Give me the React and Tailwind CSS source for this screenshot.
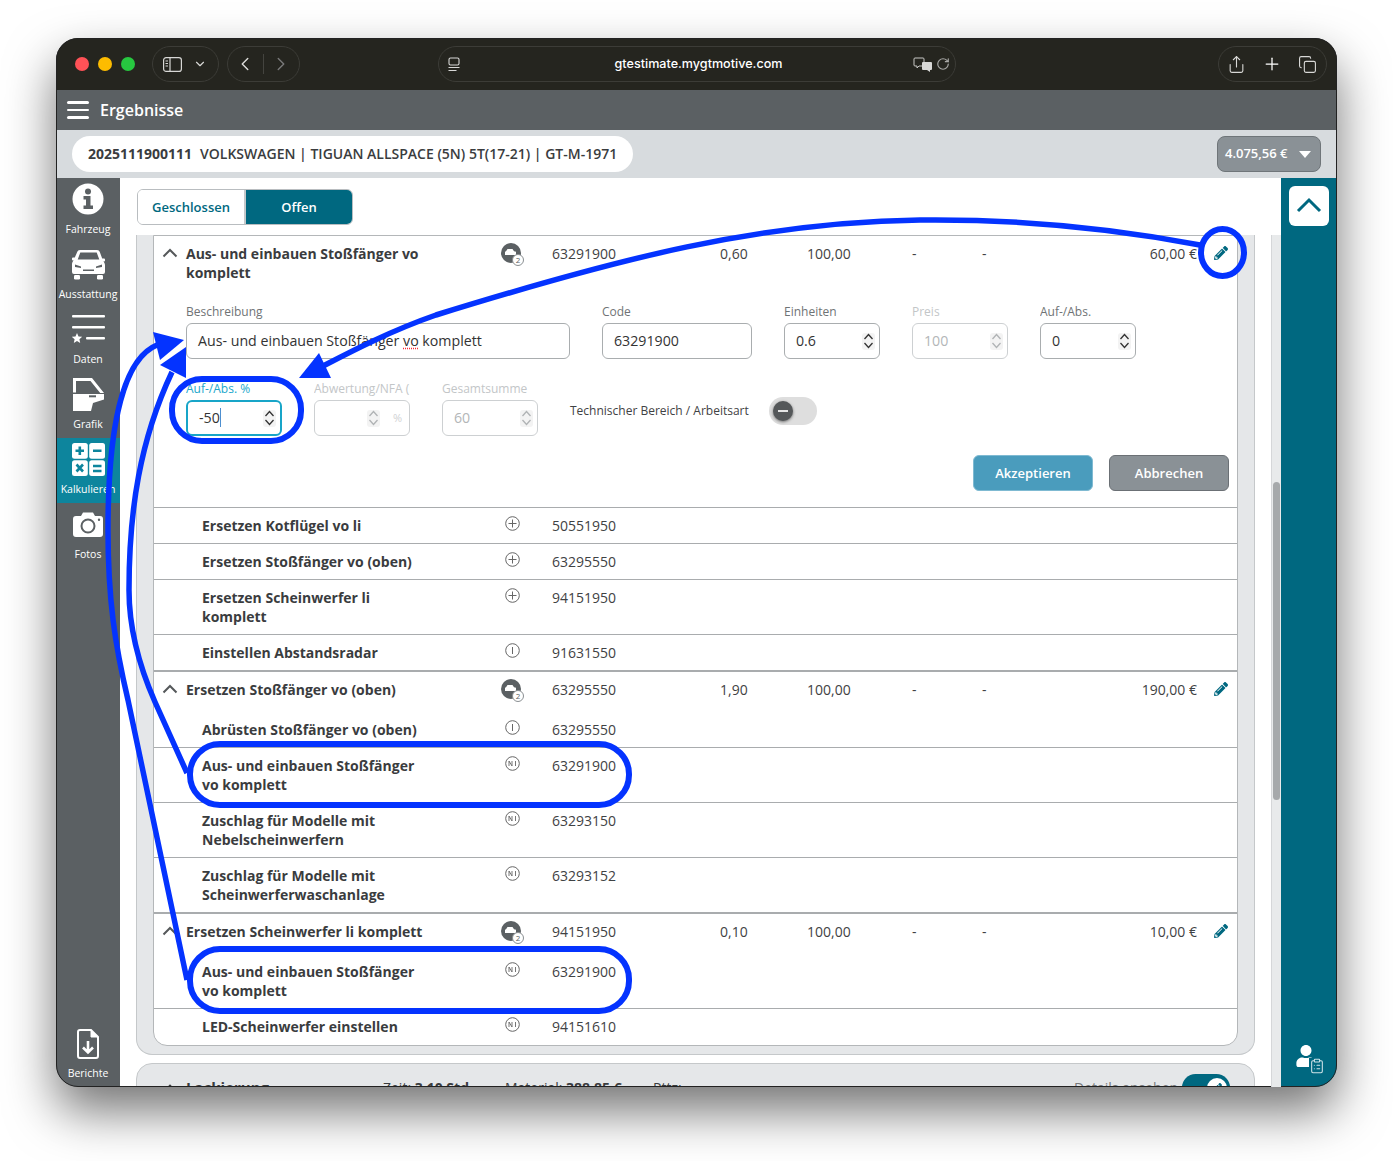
import { ChevronDown, ChevronLeft, ChevronRight, ClipboardList, Copy, Plus, RotateCw, Share } from "lucide-react";
import { FaPencilAlt, FaUser } from "react-icons/fa";

const sideItems = [
  { label: "Fahrzeug", icon: <InfoIcon /> },
  { label: "Ausstattung", icon: <CarIcon /> },
  { label: "Daten", icon: <DataIcon /> },
  { label: "Grafik", icon: <DoorIcon /> },
  { label: "Kalkulieren", icon: <CalcIcon />, active: true },
  { label: "Fotos", icon: <CameraIcon /> },
];

function InfoIcon() {
  return (
    <svg width="32" height="32" viewBox="0 0 32 32">
      <circle cx="16" cy="16" r="15.500" fill="white" />
      <circle cx="16" cy="8.500" r="3" fill="#5b6063" />
      <path d="M11.500 13h7v9.500h2.500V26H11.500v-3.500h2.500V16.500h-2.500z" fill="#5b6063" />
    </svg>
  );
}

function CarIcon() {
  return (
    <svg width="33" height="31" viewBox="0 0 33 31" fill="white">
      <path fillRule="evenodd" d="M8 1h17c1.500 0 2.300.8 2.800 2l2.400 6.500H32a1 1 0 0 1 1 1v1a1 1 0 0 1-1 1h-.7c1.100 1 1.700 2.300 1.700 3.800V23a2 2 0 0 1-2 2H2a2 2 0 0 1-2-2v-7.700c0-1.500.6-2.800 1.700-3.800H1a1 1 0 0 1-1-1v-1a1 1 0 0 1 1-1h1.800L5.200 3C5.700 1.800 6.500 1 8 1zm.3 2.500L5.700 10.500h21.600L24.700 3.500zM3 15.500v2.500l6 1v-1.500zM30 15.500v2.500l-6 1v-1.500zM11 20.500v1.500h11v-1.500z" />
      <rect x="2" y="26" width="6" height="4.500" rx="1.200" />
      <rect x="25" y="26" width="6" height="4.500" rx="1.200" />
    </svg>
  );
}

function DataIcon() {
  return (
    <svg width="33" height="28" viewBox="0 0 33 28" fill="white">
      <rect x="0" y="0" width="33" height="2.500" rx="1" />
      <rect x="0" y="11" width="33" height="2.500" rx="1" />
      <rect x="14" y="22" width="19" height="2.500" rx="1" />
      <path d="M5 18l1.500 3.400 3.700.4-2.800 2.500.8 3.700L5 25.900 1.800 27.900l.8-3.700L-.2 21.800l3.700-.4z" />
    </svg>
  );
}

function DoorIcon() {
  return (
    <svg width="32" height="33" viewBox="0 0 32 33" fill="white">
      <path d="M1 0h19l12 15h-3.800L18.500 3H4v11.500H1z" />
      <path d="M1 16h31v5.500l-11 3.500-2 8H1z" />
      <rect x="17" y="17.300" width="7" height="2" fill="#5b6063" />
    </svg>
  );
}

function CalcIcon() {
  return (
    <svg width="33" height="33" viewBox="0 0 33 33">
      <rect x="0" y="0" width="15.800" height="15.800" rx="2.500" fill="white" />
      <rect x="17.200" y="0" width="15.800" height="15.800" rx="2.500" fill="white" />
      <rect x="0" y="17.200" width="15.800" height="15.800" rx="2.500" fill="white" />
      <rect x="17.200" y="17.200" width="15.800" height="15.800" rx="2.500" fill="white" />
      <g stroke="#0d859d" strokeWidth="2.600">
        <path d="M3.500 7.800h8.500M7.800 3.500v8.500M21 7.800h8.500M4.500 21.500l6.500 7M11 21.500l-6.500 7M21 23h8.500M21 28h8.500" />
      </g>
    </svg>
  );
}

function CameraIcon() {
  return (
    <svg width="30" height="25" viewBox="0 0 30 25" fill="white">
      <path fillRule="evenodd" d="M3 4h5l2-3.500h10L22 4h5a3 3 0 0 1 3 3v15a3 3 0 0 1-3 3H3a3 3 0 0 1-3-3V7a3 3 0 0 1 3-3zm12 2.500a7.500 7.500 0 1 0 0 15 7.500 7.500 0 0 0 0-15zm0 2a5.500 5.500 0 1 1 0 11 5.500 5.500 0 0 1 0-11zM26 6.500a1.200 1.200 0 1 0 0 2.400 1.200 1.200 0 0 0 0-2.400z" />
    </svg>
  );
}

function ReportIcon() {
  return (
    <svg width="24" height="32" viewBox="0 0 24 32" fill="none" stroke="white" strokeWidth="2">
      <path d="M4 2h11l7 7v19a2 2 0 0 1-2 2H4a2 2 0 0 1-2-2V4a2 2 0 0 1 2-2z" />
      <path d="M15 2v7h7" fill="white" strokeWidth="1" />
      <path d="M12 13v11M7 19.500l5 5 5-5" strokeWidth="2.600" />
    </svg>
  );
}

function SideItem({ label, icon, active }) {
  return (
    <div className={`h-[65px] flex flex-col items-center ${active ? "bg-[#0d859d]" : ""}`}>
      <div className="h-[44px] -mt-[1px] flex items-center justify-center">{icon}</div>
      <div className="text-[10.500px] leading-[14px] mt-[1px] text-white">{label}</div>
    </div>
  );
}

function Stepper({ faded }) {
  return (
    <div className="w-[13px] h-[17px] rounded-[3px] bg-[#f3f3f3] flex items-center justify-center">
      <svg width="11" height="16" viewBox="0 0 11 16" fill="none" stroke={faded ? "#b0b3b5" : "#333"} strokeWidth="1.300">
        <path d="M1.500 6L5.500 1.500 9.500 6M1.500 10l4 4.500 4-4.500" />
      </svg>
    </div>
  );
}

function Field({ label, width, value, disabled, stepper, focus, children }) {
  const labelColor = focus ? "text-[#20a7cb]" : disabled ? "text-[#c3c6c8]" : "text-[#6f7375]";
  const border = focus ? "border-2 border-[#18a5c8]" : disabled ? "border border-[#cdd0d2]" : "border border-[#a9adaf]";
  const textColor = disabled ? "text-[#b3b6b8]" : "text-[#333]";
  return (
    <div className={width}>
      <div className={`h-[16px] pt-[1px] text-[12px] leading-[16px] whitespace-nowrap overflow-hidden mb-[4px] ${labelColor}`}>{label}</div>
      <div className={`h-[36px] rounded-[6px] pl-[11px] pr-[4px] flex items-center justify-between text-[14.200px] bg-white ${border} ${textColor}`}>
        <div>{children || value}</div>
        {stepper && <Stepper faded={disabled} />}
      </div>
    </div>
  );
}

function CarBadge() {
  return (
    <div className="relative w-[20px] h-[20px] rounded-full bg-[#5b6063] flex items-center justify-center">
      <svg width="11" height="6" viewBox="0 0 11 6" fill="white" className="-mt-[3px] -ml-[2px]">
        <path d="M2.500 0h5l1.500 2.200 2 .6V6H0V2.800l1-.6z" />
      </svg>
      <div className="absolute right-[-3px] bottom-[-3px] w-[12px] h-[12px] rounded-full bg-white border border-[#8a8f92] text-[8px] leading-[10px] text-center text-[#5b6063]">
        2
      </div>
    </div>
  );
}

function RoundIcon({ kind }) {
  return (
    <svg width="15" height="15" viewBox="0 0 15 15" fill="none" stroke="#666" strokeWidth="1">
      <circle cx="7.500" cy="7.500" r="6.800" />
      {kind === "plus" && <path d="M7.500 3.500v8M3.500 7.500h8" />}
      {kind === "info" && <path d="M7.500 4v7" />}
      {kind === "ni" && <path d="M4 10V5l3 5V5M10.500 5v5" strokeWidth="0.900" />}
    </svg>
  );
}

function ChildRow({ title, code, icon, height }) {
  return (
    <div className={`flex border-t border-[#a9acae] pl-[48px] pt-[8px] text-[14px] leading-[19px] ${height}`}>
      <div className="w-[298px]">
        <div className="w-[222px] font-bold text-[#3a3c3e]">{title}</div>
      </div>
      <div className="w-[24px] mr-[28px] flex justify-center h-[15px]">
        <RoundIcon kind={icon} />
      </div>
      <div className="text-[#3f4244]">{code}</div>
    </div>
  );
}

function MainRow({ title, code, units, price, height, form }) {
  return (
    <div className={`flex text-[14px] leading-[19px] pt-[8px] ${form ? "h-[67px]" : height} ${form ? "" : "border-t-2 border-[#a9acae]"}`}>
      <div className="w-[32px] pl-[8px] pt-[4px]">
        <svg width="16" height="10" viewBox="0 0 16 10" fill="none" stroke="#55585a" strokeWidth="2">
          <path d="M1.500 8.500L8 2l6.500 6.500" />
        </svg>
      </div>
      <div className="w-[314px]">
        <div className="w-[250px] font-bold text-[#3a3c3e]">{title}</div>
      </div>
      <div className="w-[24px] mr-[29px] -ml-[1px] flex justify-center -mt-[1px]">
        <CarBadge />
      </div>
      <div className="w-[168px] text-[#3f4244]">{code}</div>
      <div className="w-[87px] text-[#3f4244]">{units}</div>
      <div className="w-[105px] text-[#3f4244]">100,00</div>
      <div className="w-[70px] text-[#3f4244]">-</div>
      <div className="w-[20px] text-[#3f4244]">-</div>
      <div className="w-[195px] text-right text-[#3f4244]">{price}</div>
      <div className="pl-[17px] pt-[2px]">
        <FaPencilAlt size={14} className="text-[#006880]" />
      </div>
    </div>
  );
}

function EditForm() {
  return (
    <div className="pl-[32px] pr-[8px] pb-[16px]">
      <div className="flex gap-8">
        <Field label="Beschreibung" width="w-[384px]">
          Aus- und einbauen Stoßfänger <span className="underline decoration-dotted decoration-red-500">vo</span> komplett
        </Field>
        <Field label="Code" width="w-[150px]" value="63291900" />
        <Field label="Einheiten" width="w-[96px]" value="0.6" stepper />
        <Field label="Preis" width="w-[96px]" value="100" disabled stepper />
        <Field label="Auf-/Abs." width="w-[96px]" value="0" stepper />
      </div>
      <div className="flex gap-8 mt-[21px]">
        <Field label="Auf-/Abs. %" width="w-[96px]" focus stepper>
          <span className="border-r border-[#4d8fd0] pr-[0.500px]">-50</span>
        </Field>
        <Field label="Abwertung/NFA (Prozent)" width="w-[96px]" disabled>
          <div className="w-[76px] flex justify-end items-center gap-[13px]">
            <Stepper faded />
            <span className="text-[11px] text-[#d0d2d4]">%</span>
          </div>
        </Field>
        <Field label="Gesamtsumme" width="w-[96px]" value="60" disabled stepper />
        <div className="flex items-center mt-[20px] h-[22px] gap-[20px]">
          <span className="text-[12px] text-[#3f4244]">Technischer Bereich / Arbeitsart</span>
          <div className="w-[48px] h-[28px] rounded-full bg-[#dedede] flex items-center pl-[4px]">
            <div className="w-[20px] h-[20px] rounded-full bg-[#55585a] shadow-[0_1px_3px_rgba(0,0,0,0.5)] flex items-center justify-center">
              <div className="w-[10px] h-[2px] bg-[#e5e5e5]"></div>
            </div>
          </div>
        </div>
      </div>
      <div className="flex justify-end gap-4 mt-[19px]">
        <div className="w-[120px] h-[36px] pt-[1px] rounded-[6px] bg-[#4a9cbd] border border-[#7fbad2] text-white text-[13px] font-semibold flex items-center justify-center">
          Akzeptieren
        </div>
        <div className="w-[120px] h-[36px] pt-[1px] rounded-[6px] bg-[#8a9196] border border-[#6b7075] text-white text-[13px] font-semibold flex items-center justify-center">
          Abbrechen
        </div>
      </div>
    </div>
  );
}

function Annotations() {
  return (
    <svg className="absolute left-0 top-0 pointer-events-none" width="1393" height="1161" fill="none" stroke="#0433ff" strokeWidth="5.500">
      <ellipse cx="1222.500" cy="252.500" rx="21.500" ry="23.500" strokeWidth="6" />
      <rect x="172" y="379" width="129" height="62" rx="30" strokeWidth="6" />
      <rect x="190" y="744" width="439" height="61" rx="30" strokeWidth="6" />
      <rect x="190" y="949" width="439" height="62" rx="30" strokeWidth="6" />
      <path d="M1200 245C1100 226 1010 219 920 220C760 222 620 258 436 315C390 331 350 352 323 366" />
      <path d="M157 345C125 358 108 420 108 530C108 600 115 645 128 700L187 980" />
      <path d="M172 372C140 440 129 510 129 590C129 630 140 668 155 702L187 773" />
      <g fill="#0433ff" stroke="none">
        <path d="M299 378L319 353L331 378z" />
        <path d="M184 340L153 332L160 360z" />
        <path d="M186 347L160 365L186 378z" />
      </g>
    </svg>
  );
}

export default function App() {
  return (
    <div className="relative h-[1161px] bg-white px-[56px] pt-[38px] [font-family:'Open_Sans',sans-serif]">
      <div className="h-[1049px] flex flex-col overflow-hidden rounded-[22px] outline outline-1 -outline-offset-1 outline-[#222] shadow-[0_24px_50px_rgba(0,0,0,0.55)]">
        {/* browser chrome */}
        <div className="h-[52px] shrink-0 bg-[#25251f] flex items-center pl-[19px] pr-[10px] text-[#d8d8d6]">
          <div className="flex gap-[9px] w-[77px]">
            <div className="w-[14px] h-[14px] rounded-full bg-[#ff5257]"></div>
            <div className="w-[14px] h-[14px] rounded-full bg-[#fdbc00]"></div>
            <div className="w-[14px] h-[14px] rounded-full bg-[#27c840]"></div>
          </div>
          <div className="w-[67px] h-[36px] rounded-full border border-[#3c3c37] flex items-center pl-[10px] gap-[11px]">
            <svg width="19" height="15" viewBox="0 0 19 15" fill="none" stroke="#d8d8d6" strokeWidth="1.200">
              <rect x="0.600" y="0.600" width="17.800" height="13.800" rx="2.500" />
              <path d="M7 1v13M2.500 4h2.500M2.500 6.500h2.500M2.500 9h2.500" />
            </svg>
            <ChevronDown size={14} />
          </div>
          <div className="ml-[8px] w-[73px] h-[36px] rounded-full border border-[#3c3c37] flex items-center pl-[6px]">
            <ChevronLeft size={22} strokeWidth={1.600} />
            <div className="w-px h-[20px] bg-[#44443f] mx-[7px]"></div>
            <ChevronRight size={22} strokeWidth={1.600} className="text-[#777] -ml-[1px]" />
          </div>
          <div className="ml-[138px] w-[518px] h-[36px] rounded-full border border-[#3c3c37] flex items-center pl-[8px] pr-[5px]">
            <svg width="14" height="15" viewBox="0 0 14 15" fill="none" stroke="#d8d8d6" strokeWidth="1.100">
              <rect x="2" y="1" width="10" height="7" rx="1.500" />
              <path d="M1.500 10.500h11M1.500 13.500h8" />
            </svg>
            <div className="flex-1 text-center pl-[21px] text-[12.600px] font-medium text-white [font-family:Inter,sans-serif]">gtestimate.mygtmotive.com</div>
            <svg width="20" height="15" viewBox="0 0 20 15" className="-ml-[2px]">
              <path d="M2 1h8a1 1 0 0 1 1 1v6a1 1 0 0 1-1 1H6l-2 2V9H2a1 1 0 0 1-1-1V2a1 1 0 0 1 1-1z" fill="none" stroke="#c8c8c6" />
              <path d="M10 5h8a1 1 0 0 1 1 1v6a1 1 0 0 1-1 1h-1v2l-3-2h-4a1 1 0 0 1-1-1V6a1 1 0 0 1 1-1z" fill="#d8d8d6" />
            </svg>
            <RotateCw size={14} className="ml-[3px] text-[#a8a8a6]" />
          </div>
          <div className="ml-[262px] w-[109px] h-[36px] rounded-full border border-[#3c3c37] flex items-center justify-between pl-[8px] pr-[9px]">
            <Share size={19} strokeWidth={1.400} />
            <Plus size={20} strokeWidth={1.500} className="text-white" />
            <Copy size={19} strokeWidth={1.400} />
          </div>
        </div>

        {/* app header */}
        <div className="h-[40px] shrink-0 bg-[#5b6063] flex items-center pl-[11px] text-white">
          <div className="flex flex-col gap-[5px] w-[22px]">
            <div className="h-[2.500px] bg-white rounded"></div>
            <div className="h-[2.500px] bg-white rounded"></div>
            <div className="h-[2.500px] bg-white rounded"></div>
          </div>
          <div className="ml-[11px] text-[16px] font-semibold">Ergebnisse</div>
        </div>

        {/* vehicle bar */}
        <div className="h-[48px] shrink-0 bg-[#d7dbde] flex items-center justify-between pl-[16px] pr-[16px]">
          <div className="h-[36px] w-[561px] pb-[2px] rounded-full bg-white pl-[16px] flex items-center text-[14px] font-semibold text-[#3a3c3e] whitespace-nowrap">
            <span className="font-bold">2025111900111</span>
            <span className="ml-[8px]">VOLKSWAGEN | TIGUAN ALLSPACE (5N) 5T(17-21) | GT-M-1971</span>
          </div>
          <div className="w-[104px] h-[36px] rounded-[8px] bg-[#8a9196] border border-[#6f7579] flex items-center pl-[7px] gap-[11px] text-white text-[13px] font-semibold">
            <span>4.075,56 €</span>
            <div className="w-0 h-0 border-l-[6px] border-r-[6px] border-t-[7px] border-l-transparent border-r-transparent border-t-white"></div>
          </div>
        </div>

        <div className="flex-1 flex min-h-0">
          {/* sidebar */}
          <div className="w-[64px] shrink-0 bg-[#5b6063] flex flex-col justify-between">
            <div>
              {sideItems.map((item) => (
                <SideItem key={item.label} {...item} />
              ))}
            </div>
            <div className="flex flex-col items-center pb-[7px]">
              <ReportIcon />
              <div className="text-[10.500px] leading-[14px] mt-[6px] text-white">Berichte</div>
            </div>
          </div>

          {/* main */}
          <div className="flex-1 flex flex-col min-w-0 bg-white">
            <div className="h-[57px] shrink-0 pl-[17px] pt-[11px]">
              <div className="w-[216px] h-[36px] flex rounded-[6px] border border-[#b9bdc0] overflow-hidden text-[13px] font-semibold">
                <div className="w-[106px] pt-[1px] flex items-center justify-center text-[#006880] bg-white">Geschlossen</div>
                <div className="w-[2px] bg-[#c5c8ca]"></div>
                <div className="flex-1 pt-[1px] flex items-center justify-center text-white bg-[#006880]">Offen</div>
              </div>
            </div>
            <div className="flex-1 flex min-h-0 overflow-hidden">
              <div className="w-[1119px] ml-[16px] shrink-0">
                <div className="bg-[#e5e7e9] border-x border-b border-[#c5c8ca] rounded-b-[16px] pl-[16px] pr-[16px] pb-[8px]">
                  <div className="bg-white border-x border-y border-[#b4b7b9] rounded-b-[14px] h-[811px] overflow-hidden">
                    <MainRow form title="Aus- und einbauen Stoßfänger vo komplett" code="63291900" units="0,60" price="60,00 €" />
                    <EditForm />
                    <ChildRow title="Ersetzen Kotflügel vo li" icon="plus" code="50551950" height="h-[36px]" />
                    <ChildRow title="Ersetzen Stoßfänger vo (oben)" icon="plus" code="63295550" height="h-[36px]" />
                    <ChildRow title="Ersetzen Scheinwerfer li komplett" icon="plus" code="94151950" height="h-[55px]" />
                    <ChildRow title="Einstellen Abstandsradar" icon="info" code="91631550" height="h-[36px]" />
                    <MainRow title="Ersetzen Stoßfänger vo (oben)" code="63295550" units="1,90" price="190,00 €" height="h-[41px]" />
                    <div className="flex pl-[48px] pt-[9px] h-[36px] text-[14px] leading-[19px]">
                      <div className="w-[298px] font-bold text-[#3a3c3e]">Abrüsten Stoßfänger vo (oben)</div>
                      <div className="w-[24px] mr-[28px] flex justify-center">
                        <RoundIcon kind="info" />
                      </div>
                      <div className="text-[#3f4244]">63295550</div>
                    </div>
                    <ChildRow title="Aus- und einbauen Stoßfänger vo komplett" icon="ni" code="63291900" height="h-[55px]" />
                    <ChildRow title="Zuschlag für Modelle mit Nebelscheinwerfern" icon="ni" code="63293150" height="h-[55px]" />
                    <ChildRow title="Zuschlag für Modelle mit Scheinwerferwaschanlage" icon="ni" code="63293152" height="h-[55px]" />
                    <MainRow title="Ersetzen Scheinwerfer li komplett" code="94151950" units="0,10" price="10,00 €" height="h-[41px]" />
                    <div className="flex pl-[48px] pt-[9px] h-[55px] text-[14px] leading-[19px]">
                      <div className="w-[298px]">
                        <div className="w-[222px] font-bold text-[#3a3c3e]">Aus- und einbauen Stoßfänger vo komplett</div>
                      </div>
                      <div className="w-[24px] mr-[28px] flex justify-center">
                        <RoundIcon kind="ni" />
                      </div>
                      <div className="text-[#3f4244]">63291900</div>
                    </div>
                    <ChildRow title="LED-Scheinwerfer einstellen" icon="ni" code="94151610" height="h-[37px]" />
                  </div>
                </div>
                <div className="mt-[8px] h-[40px] bg-[#e5e7e9] border border-[#c5c8ca] rounded-t-[16px] flex pl-[25px] pt-[14px] text-[14px] leading-[19px] text-[#3a3c3e] whitespace-nowrap">
                  <svg width="16" height="10" viewBox="0 0 16 10" fill="none" stroke="#3a3c3e" strokeWidth="2.500" className="mt-[5px]">
                    <path d="M3 8l5-5 5 5" />
                  </svg>
                  <span className="ml-[8px] w-[197px] text-[15px] font-bold">Lackierung</span>
                  <span className="w-[122px]">Zeit: <b>3,10 Std</b></span>
                  <span className="w-[148px]">Material: <b>388,85 €</b></span>
                  <span className="w-[421px]">Pttz:</span>
                  <span className="text-[#77797b] w-[108px]">Details ansehen</span>
                  <div className="w-[48px] h-[27px] -mt-[4px] rounded-full bg-[#006880] flex justify-end items-center pr-[3px]">
                    <div className="w-[20px] h-[20px] rounded-full bg-white flex items-center justify-center">
                      <FaPencilAlt size={10} className="text-[#006880]" />
                    </div>
                  </div>
                </div>
              </div>
              <div className="ml-[16px] flex-1 bg-[#e8eaeb] border-l border-[#d5d7d9] relative">
                <div className="absolute left-[1px] top-[247px] w-[7px] h-[318px] rounded-full bg-[#a6a9ab]"></div>
              </div>
            </div>
          </div>

          {/* right rail */}
          <div className="w-[56px] shrink-0 bg-[#006880] flex flex-col items-center justify-between pt-[8px] pb-[14px]">
            <div className="w-[40px] h-[40px] rounded-[6px] bg-white flex items-center justify-center">
              <svg width="26" height="16" viewBox="0 0 26 16" fill="none" stroke="#006880" strokeWidth="3" className="-mt-[3px]">
                <path d="M2 14L13 3l11 11" />
              </svg>
            </div>
            <div className="relative w-[28px] h-[28px]">
              <FaUser size={22} className="text-white" />
              <ClipboardList size={16} strokeWidth={1.600} className="absolute right-[-2px] bottom-[-1px] text-[#cfe3e8] bg-[#006880]" />
            </div>
          </div>
        </div>
      </div>
      <Annotations />
    </div>
  );
}
